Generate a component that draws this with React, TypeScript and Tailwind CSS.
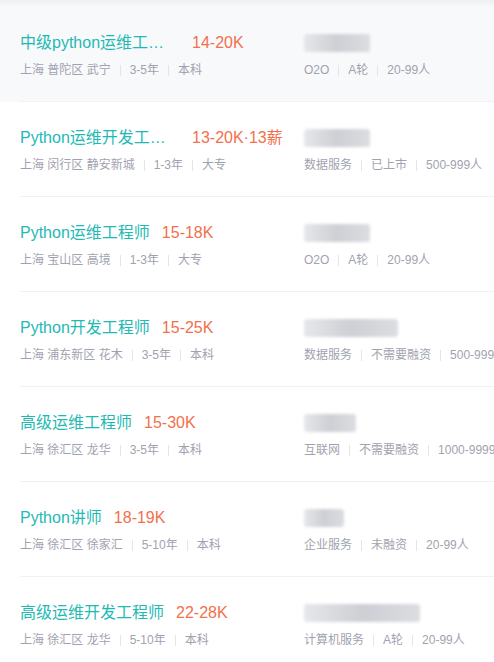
import React from "react";

type Job = {
	title: string;
	salary: string;
	area: string;
	exp: string;
	degree: string;
	blob: number;
	company: string[];
};

const jobs: Job[] = [
	{ title: "中级python运维工程师", salary: "14-20K", area: "上海 普陀区 武宁", exp: "3-5年", degree: "本科", blob: 66, company: ["O2O", "A轮", "20-99人"] },
	{ title: "Python运维开发工程师", salary: "13-20K·13薪", area: "上海 闵行区 静安新城", exp: "1-3年", degree: "大专", blob: 66, company: ["数据服务", "已上市", "500-999人"] },
	{ title: "Python运维工程师", salary: "15-18K", area: "上海 宝山区 高境", exp: "1-3年", degree: "大专", blob: 66, company: ["O2O", "A轮", "20-99人"] },
	{ title: "Python开发工程师", salary: "15-25K", area: "上海 浦东新区 花木", exp: "3-5年", degree: "本科", blob: 94, company: ["数据服务", "不需要融资", "500-999人"] },
	{ title: "高级运维工程师", salary: "15-30K", area: "上海 徐汇区 龙华", exp: "3-5年", degree: "本科", blob: 52, company: ["互联网", "不需要融资", "1000-9999人"] },
	{ title: "Python讲师", salary: "18-19K", area: "上海 徐汇区 徐家汇", exp: "5-10年", degree: "本科", blob: 40, company: ["企业服务", "未融资", "20-99人"] },
	{ title: "高级运维开发工程师", salary: "22-28K", area: "上海 徐汇区 龙华", exp: "5-10年", degree: "本科", blob: 116, company: ["计算机服务", "A轮", "20-99人"] },
];

const Meta = ({ items }: { items: string[] }) => (
	<div className="flex items-center text-[12px] leading-[18px] text-[#9fa3af] whitespace-nowrap">
		{items.map((t, i) => (
			<React.Fragment key={i}>
				{i > 0 && <span className="mx-[9px] h-[11px] w-px bg-[#e3e5e8]" />}
				<span>{t}</span>
			</React.Fragment>
		))}
	</div>
);

export default function App() {
	return (
		<div
			className="w-[494px] h-[662px] overflow-hidden bg-white"
			style={{ fontFamily: '"Liberation Sans", "Noto Sans CJK SC", sans-serif' }}
		>
			<div className="h-[7px] bg-gradient-to-b from-[#eeeff1] to-[#f8f9fb]" />
			{jobs.map((job, i) => (
				<div key={i} className={i === 0 ? "bg-[#f8f9fb]" : "bg-white"}>
					<div className="ml-5 h-[95px] border-b border-[#f0f1f3] pt-6 flex">
						<div className="w-[284px] shrink-0">
							<div className="flex items-center h-6 leading-6 text-[16px]">
								<span className="max-w-[160px] truncate text-[#1fbab4]">{job.title}</span>
								<span className="ml-3 text-[#f3704c] whitespace-nowrap">{job.salary}</span>
							</div>
							<div className="mt-[6px]">
								<Meta items={[job.area, job.exp, job.degree]} />
							</div>
						</div>
						<div className="shrink-0">
							<div className="h-6 flex items-center">
								<div
									className="h-[18px] rounded-[3px] blur-[1.5px] bg-gradient-to-r from-[#e6e7ea] via-[#cdcfd4] to-[#dcdde1]"
									style={{ width: job.blob }}
								/>
							</div>
							<div className="mt-[6px]">
								<Meta items={job.company} />
							</div>
						</div>
					</div>
				</div>
			))}
		</div>
	);
}
